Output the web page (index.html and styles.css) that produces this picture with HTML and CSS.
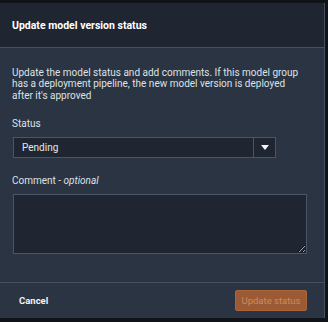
FILE: index.html
```html
<!DOCTYPE html>
<html lang="en">
<head>
    <meta charset="UTF-8">
    <meta name="viewport" content="width=device-width, initial-scale=1.0">
    <title>Update model version status</title>
    <link rel="stylesheet" href="styles.css">
</head>
<body>
    <div class="dialog">
        <div class="dialog-header">Update model version status</div>

        <div class="dialog-body">
            <p class="intro">Update the model status and add comments. If this model group has a deployment pipeline, the new model version is deployed after it's approved</p>

            <label class="field-label">Status</label>
            <div class="select">
                <span class="select-value">Pending</span>
                <span class="select-caret"></span>
            </div>

            <label class="field-label">Comment - <em>optional</em></label>
            <textarea class="comment"></textarea>
        </div>

        <div class="dialog-footer">
            <button class="btn-link">Cancel</button>
            <button class="btn-primary" disabled>Update status</button>
        </div>
    </div>
</body>
</html>
```

FILE: styles.css
```css
* { box-sizing: border-box; }
html, body { height: 100%; }
body {
    margin: 0;
    padding: 3px 3px 4px 0;
    background: #101317;
    font-family: Roboto, "Noto Sans", Arial, sans-serif;
    color: #e3e6ea;
}
.dialog {
    height: 100%;
    display: flex;
    flex-direction: column;
    background: #2b3442;
    border-right: 1px solid #465160;
}
.dialog-header {
    height: 45px;
    flex: none;
    display: flex;
    align-items: center;
    padding: 0 12px;
    background: #1f2632;
    border-bottom: 1px solid #465160;
    font-size: 10.5px;
    font-weight: 700;
    color: #fff;
}
.dialog-body {
    flex: 1;
    padding: 19px 17px 0 12px;
    display: flex;
    flex-direction: column;
}
.intro {
    margin: 0 0 16px;
    font-size: 10px;
    line-height: 11.3px;
    color: #dde2e7;
}
.field-label {
    font-size: 10px;
    line-height: 13px;
    margin-bottom: 7px;
    color: #dde2e7;
}
.field-label em { font-style: italic; }
.select {
    margin-left: 1px;
    width: 263px;
    height: 21px;
    display: flex;
    background: #1f2632;
    border: 1px solid #4b5563;
    margin-bottom: 16px;
}
.select-value {
    flex: 1;
    padding-left: 8px;
    font-size: 10px;
    line-height: 19px;
    color: #e3e6ea;
    border-right: 1px solid #4b5563;
}
.select-caret {
    width: 21px;
    position: relative;
}
.select-caret::after {
    content: "";
    position: absolute;
    left: 7px;
    top: 7px;
    border-left: 4px solid transparent;
    border-right: 4px solid transparent;
    border-top: 5px solid #f2f4f6;
}
.comment {
    margin-left: 1px;
    width: 294px;
    height: 60px;
    background: #1f2632;
    border: 1px solid #4b5563;
    border-radius: 0;
    resize: vertical;
    color: #e3e6ea;
}
.dialog-footer {
    height: 36px;
    flex: none;
    display: flex;
    align-items: center;
    justify-content: space-between;
    padding: 0 17px 0 19px;
    border-top: 1px solid #465160;
}
.btn-link {
    background: none;
    border: none;
    padding: 0;
    font-family: inherit;
    font-size: 9.5px;
    font-weight: 700;
    color: #f2f4f6;
}
.btn-primary {
    width: 72px;
    height: 21px;
    padding: 0;
    white-space: nowrap;
    background: #9b5a34;
    border: 1px solid #a8643b;
    border-radius: 2px;
    font-family: inherit;
    font-size: 9.5px;
    color: #cf8a5e;
}
```
